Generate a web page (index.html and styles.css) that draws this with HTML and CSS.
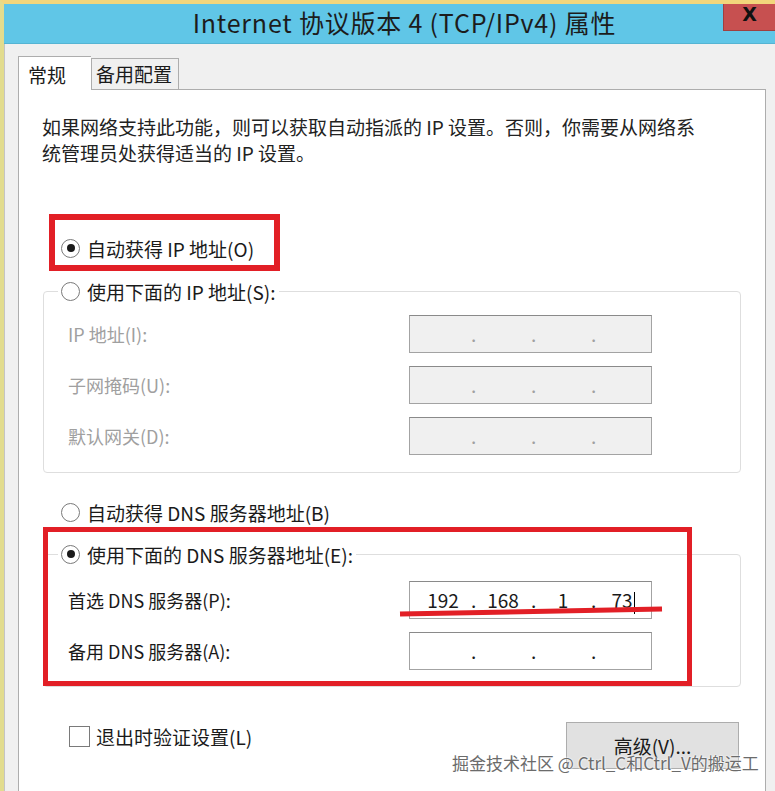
FILE: index.html
```html
<!DOCTYPE html>
<html lang="zh-CN">
<head>
  <meta charset="UTF-8" />
  <title>Internet 协议版本 4 (TCP/IPv4) 属性</title>
  <link rel="stylesheet" href="styles.css">
</head>
<body>
  <div class="window">
    <div class="titlebar">
      <div class="title">Internet 协议版本 4 (TCP/IPv4) 属性</div>
      <div class="close">X</div>
    </div>

    <div class="client">
      <div class="tabs">
        <div class="tab active">常规</div>
        <div class="tab">备用配置</div>
      </div>

      <div class="panel">
        <p class="desc">如果网络支持此功能，则可以获取自动指派的 IP 设置。否则，你需要从网络系<br>统管理员处获得适当的 IP 设置。</p>

        <div class="option first"><span class="radio on"></span>自动获得 IP 地址(O)</div>

        <fieldset class="group ip-group">
          <legend><span class="legend-row"><span class="radio"></span>使用下面的 IP 地址(S):</span></legend>
          <div class="rows">
            <span class="label off">IP 地址(I):</span>
            <div class="ipbox off"><span></span><i>.</i><span></span><i>.</i><span></span><i>.</i><span></span></div>
            <span class="label off">子网掩码(U):</span>
            <div class="ipbox off"><span></span><i>.</i><span></span><i>.</i><span></span><i>.</i><span></span></div>
            <span class="label off">默认网关(D):</span>
            <div class="ipbox off"><span></span><i>.</i><span></span><i>.</i><span></span><i>.</i><span></span></div>
          </div>
        </fieldset>

        <div class="option dns-auto"><span class="radio"></span>自动获得 DNS 服务器地址(B)</div>

        <fieldset class="group dns-group">
          <legend><span class="legend-row"><span class="radio on"></span>使用下面的 DNS 服务器地址(E):</span></legend>
          <div class="rows">
            <span class="label">首选 DNS 服务器(P):</span>
            <div class="ipbox"><span>192</span><i>.</i><span>168</span><i>.</i><span>1</span><i>.</i><span>73<b class="caret"></b></span></div>
            <span class="label">备用 DNS 服务器(A):</span>
            <div class="ipbox"><span></span><i>.</i><span></span><i>.</i><span></span><i>.</i><span></span></div>
          </div>
        </fieldset>

        <div class="footer">
          <div class="check-row"><span class="checkbox"></span>退出时验证设置(L)</div>
          <button class="btn">高级(V)...</button>
        </div>
      </div>
    </div>
  </div>

  <!-- red annotations drawn over the dialog -->
  <div class="mark mark-ip"></div>
  <div class="mark mark-dns"></div>
  <svg class="underline" width="272" height="16" viewBox="0 0 272 16">
    <line x1="4" y1="12" x2="266" y2="7" stroke="#e21f26" stroke-width="5" />
  </svg>

  <div class="watermark">掘金技术社区 @ Ctrl_C和Ctrl_V的搬运工</div>
</body>
</html>
```

FILE: styles.css
```css
* {
  margin: 0;
  padding: 0;
  box-sizing: border-box;
}

html, body {
  height: 100%;
}

body {
  background: #f0f0f0;
  font-family: "Noto Sans CJK SC", "Noto Sans", sans-serif;
  color: #1a1a1a;
  overflow: hidden;
}

.window {
  height: 791px;
  display: flex;
  flex-direction: column;
  border-top: 4px solid #f2d67c;
  border-left: 4px solid #e2dc8e;
}

/* title bar */
.titlebar {
  height: 40px;
  display: flex;
  background: #60c6e7;
  border-bottom: 1px solid #55b4d3;
}

.title {
  flex: 1;
  text-align: center;
  padding-left: 82px;
  font-size: 25px;
  letter-spacing: 0.8px;
  line-height: 36px;
  color: #1c1c1c;
  white-space: nowrap;
}

.close {
  width: 52px;
  height: 27px;
  background: #c75050;
  border-left: 1px solid #a04040;
  border-bottom: 1px solid #a04040;
  font: bold 19px/20px "DejaVu Sans", sans-serif;
  text-align: center;
  color: #111;
}

/* client area */
.client {
  flex: 1;
  display: flex;
  flex-direction: column;
  padding: 12px 9px 0 13px;
  border-left: 1px solid #c4c4c4;
}

.tabs {
  display: flex;
  align-items: flex-end;
}

.tab {
  height: 31px;
  padding: 0 6px 0 4px;
  font-size: 19px;
  line-height: 30px;
  background: #f0f0f0;
  border: 1px solid #adadad;
  border-bottom: none;
}

.tab.active {
  position: relative;
  z-index: 1;
  height: 34px;
  margin-bottom: -1px;
  padding: 0 25px 0 9px;
  line-height: 36px;
  background: #fff;
  border-right: none;
}

.panel {
  flex: 1;
  background: #fff;
  border: 1px solid #adadad;
  border-bottom: none;
  padding: 24px 24px 0;
}

.desc {
  margin-left: -1px;
  font-size: 19px;
  line-height: 26px;
  color: #222;
}

.option {
  display: flex;
  align-items: center;
  gap: 7px;
  height: 26px;
  padding-left: 18px;
  font-size: 19px;
}

.option.first {
  margin-top: 69px;
}

.option.dns-auto {
  margin-top: 26px;
}

.radio {
  width: 19px;
  height: 19px;
  flex-shrink: 0;
  border-radius: 50%;
  border: 1px solid #7a7a7a;
  background: #fff;
  display: flex;
  align-items: center;
  justify-content: center;
}

.radio.on::after {
  content: "";
  width: 8px;
  height: 8px;
  border-radius: 50%;
  background: #1a1a1a;
}

/* group boxes */
.group {
  border: 1px solid #dedede;
  border-radius: 4px;
  padding: 11px 0 17px 0;
}

.ip-group {
  margin-top: 17px;
}

.dns-group {
  margin-top: 16px;
  padding-top: 14px;
  padding-bottom: 16px;
}

.group legend {
  margin-left: 14px;
  padding: 0 3px;
}

.legend-row {
  display: flex;
  align-items: center;
  gap: 7px;
  height: 26px;
  font-size: 19px;
}

.rows {
  display: grid;
  grid-template-columns: 341px 243px;
  row-gap: 13px;
  align-items: center;
  padding-left: 24px;
}

.label {
  font-size: 18px;
  color: #1a1a1a;
}

.label.off {
  color: #a0a0a0;
}

.ipbox {
  height: 38px;
  display: grid;
  grid-template-columns: 56px 4px 56px 4px 56px 4px 56px;
  align-items: center;
  padding-left: 5px;
  background: #fff;
  border: 1px solid #a3a3a3;
  border-top-color: #8a8a8a;
  font-size: 19px;
  line-height: 36px;
}

.ipbox span {
  text-align: center;
  color: #1a1a1a;
}

.ipbox i {
  font-style: normal;
  text-align: center;
  color: #1a1a1a;
}

.ipbox.off {
  background: #f0f0f0;
}

.ipbox.off i {
  color: #a0a0a0;
}

.caret {
  display: inline-block;
  width: 1px;
  height: 22px;
  margin-left: 1px;
  background: #000;
  vertical-align: middle;
}

/* bottom row */
.footer {
  display: flex;
  justify-content: space-between;
  align-items: flex-start;
  margin-top: 35px;
  padding: 0 2px 0 26px;
}

.check-row {
  display: flex;
  align-items: center;
  gap: 6px;
  height: 26px;
  margin-top: 1px;
  font-size: 19px;
}

.checkbox {
  width: 21px;
  height: 21px;
  background: #fff;
  border: 1px solid #7a7a7a;
}

.btn {
  width: 173px;
  height: 47px;
  background: #e1e1e1;
  border: 1px solid #adadad;
  font-family: "Noto Sans CJK SC", sans-serif;
  font-size: 19px;
  color: #1a1a1a;
}

/* annotations */
.mark {
  position: absolute;
  border: 6px solid #e21f26;
}

.mark-ip {
  left: 49px;
  top: 214px;
  width: 231px;
  height: 57px;
}

.mark-dns {
  left: 43px;
  top: 527px;
  width: 649px;
  height: 159px;
  border-width: 5px;
}

.underline {
  position: absolute;
  left: 396px;
  top: 602px;
}

.watermark {
  position: absolute;
  left: 452px;
  top: 750px;
  font-size: 17px;
  color: #6b6b6b;
  text-shadow: 0 0 2px #fff, 0 0 2px #fff;
  white-space: nowrap;
}
```
